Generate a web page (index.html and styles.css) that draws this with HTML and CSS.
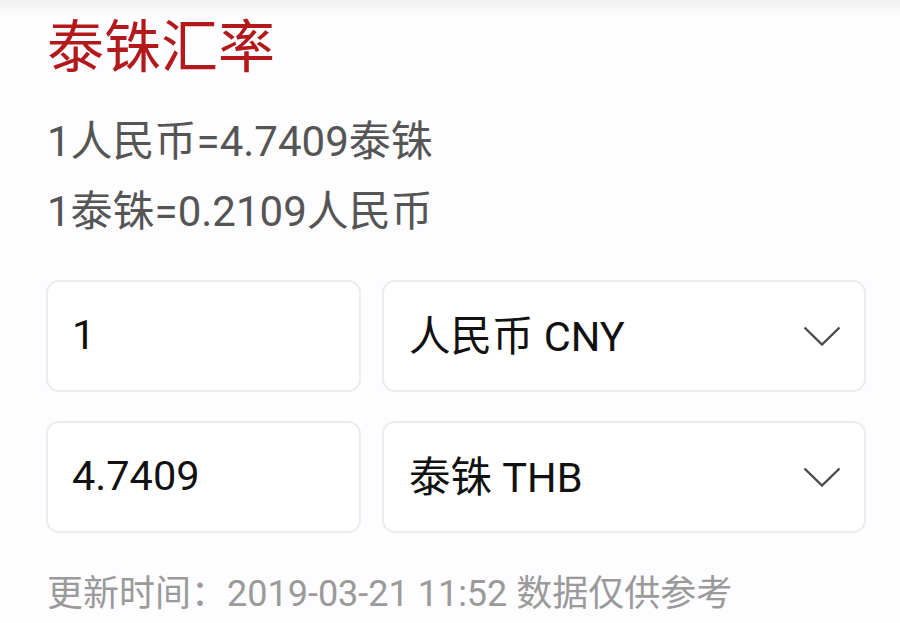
FILE: index.html
```html
<!DOCTYPE html>
<html lang="zh-CN">
<head>
<meta charset="utf-8">
<link rel="stylesheet" href="styles.css">
</head>
<body>
<div class="shade"></div>
<main class="page">
  <h1 class="title">泰铢汇率</h1>
  <div class="rates">
    <p class="rate">1人民币=4.7409泰铢</p>
    <p class="rate">1泰铢=0.2109人民币</p>
  </div>
  <div class="grid">
    <div class="box amount">1</div>
    <div class="box select">
      <span class="label">人民币 CNY</span>
      <svg class="chev" width="38" height="20" viewBox="0 0 38 20"><polyline points="1.5,1.5 19,18.5 36.5,1.5" fill="none" stroke="#4a4a4a" stroke-width="2.4" stroke-linejoin="miter"/></svg>
    </div>
    <div class="box amount">4.7409</div>
    <div class="box select">
      <span class="label">泰铢 THB</span>
      <svg class="chev" width="38" height="20" viewBox="0 0 38 20"><polyline points="1.5,1.5 19,18.5 36.5,1.5" fill="none" stroke="#4a4a4a" stroke-width="2.4" stroke-linejoin="miter"/></svg>
    </div>
  </div>
  <p class="footer">更新时间：2019-03-21 11:52 数据仅供参考</p>
</main>
</body>
</html>
```
FILE: styles.css
```css
html, body {
  margin: 0;
  padding: 0;
  background: #fdfcfe;
}
body {
  font-family: "Roboto", "Noto Sans CJK SC", sans-serif;
  position: relative;
  height: 623px;
  overflow: hidden;
}
.shade {
  position: absolute;
  left: 0;
  right: 0;
  top: 0;
  height: 16px;
  background: linear-gradient(#f0f0f0, rgba(253,252,254,0));
}
.page {
  padding: 19px 34px 0 46px;
  position: relative;
}
.title {
  margin: 0;
  font-size: 57px;
  line-height: 57px;
  font-weight: 400;
  color: #b3191b;
  padding-left: 1px;
}
.rates {
  margin-top: 31px;
}
.rate {
  margin: 0;
  font-size: 42px;
  line-height: 70px;
  color: #555555;
  padding-left: 1px;
}
.grid {
  margin-top: 33px;
  display: grid;
  grid-template-columns: 315px 484px;
  grid-auto-rows: 112px;
  column-gap: 21px;
  row-gap: 29px;
}
.box {
  box-sizing: border-box;
  background: #ffffff;
  border: 2px solid #ececec;
  border-radius: 13px;
  display: flex;
  align-items: center;
  font-size: 41.5px;
  color: #111111;
}
.amount {
  padding: 0 0 4px 24px;
}
.select {
  padding: 0 23px 0 25px;
  justify-content: space-between;
}
.label {
  margin-bottom: 6px;
}
.chev {
  display: block;
}
.footer {
  margin: 41px 0 0 0;
  font-size: 36px;
  line-height: 40px;
  color: #9a9a9a;
  padding-left: 1px;
}
```
